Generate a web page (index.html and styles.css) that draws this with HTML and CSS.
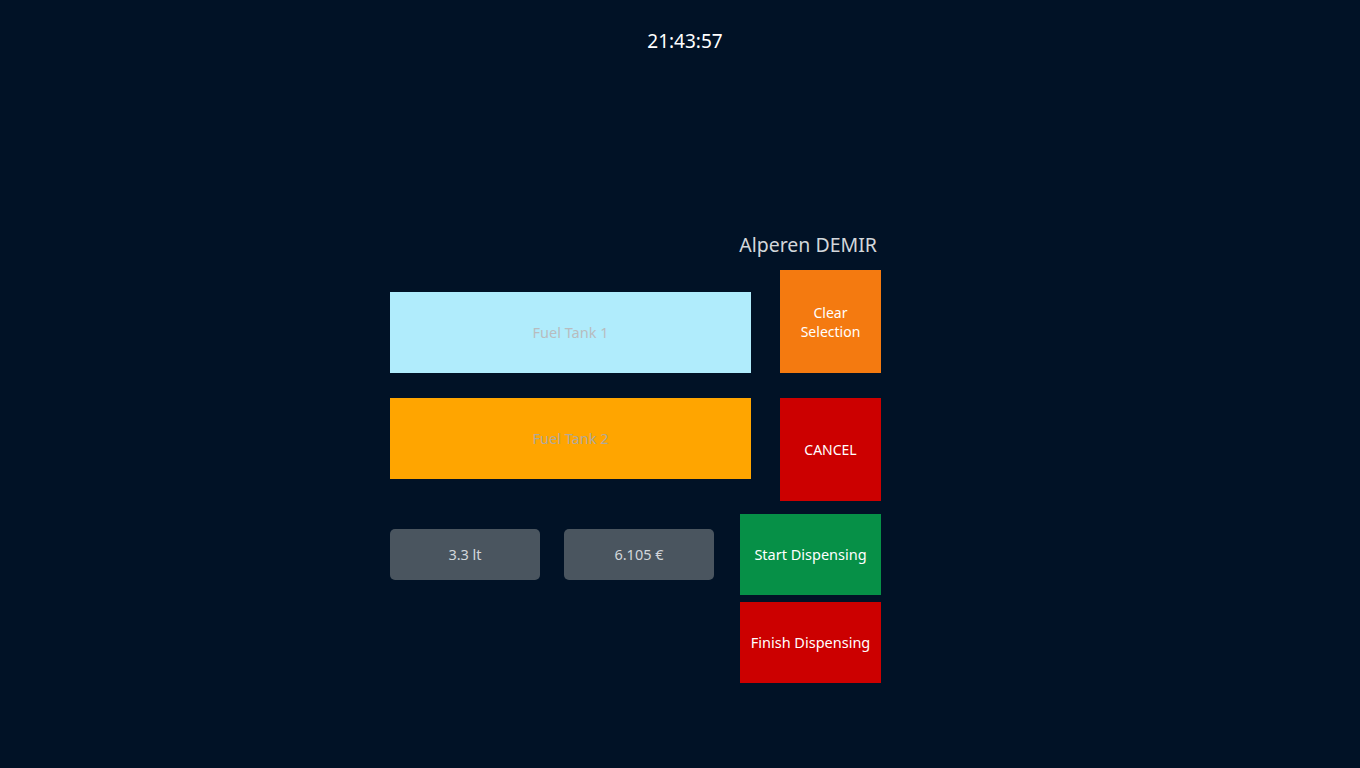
FILE: index.html
```html
<!DOCTYPE html>
<html>
<head>
<meta charset="utf-8">
<link rel="stylesheet" href="styles.css">
</head>
<body>
<div class="screen">
  <div class="clock">21:43:57</div>
  <div class="panel">
    <div class="user">Alperen DEMIR</div>
    <div class="row row-1">
      <div class="tank tank-1">Fuel Tank 1</div>
      <div class="btn btn-clear">Clear<br>Selection</div>
    </div>
    <div class="row row-2">
      <div class="tank tank-2">Fuel Tank 2</div>
      <div class="btn btn-cancel">CANCEL</div>
    </div>
    <div class="row row-3">
      <div class="values">
        <div class="value">3.3 lt</div>
        <div class="value">6.105 €</div>
      </div>
      <div class="btn btn-wide btn-start">Start Dispensing</div>
    </div>
    <div class="row row-4">
      <div class="btn btn-wide btn-finish">Finish Dispensing</div>
    </div>
  </div>
</div>
</body>
</html>
```
FILE: styles.css
```css
* { box-sizing: border-box; }
html, body {
  margin: 0;
  padding: 0;
  background: #011226;
  font-family: "Noto Sans", "Open Sans", sans-serif;
}
.screen {
  width: 1360px;
  height: 768px;
  display: flex;
  flex-direction: column;
}
.clock {
  margin-top: 28px;
  text-align: center;
  color: #ffffff;
  font-size: 19px;
  line-height: 26px;
  padding-left: 10px;
}
.panel {
  margin-top: 178px;
  margin-left: 390px;
  width: 491px;
  display: flex;
  flex-direction: column;
}
.user {
  text-align: right;
  color: #d3d7db;
  font-size: 19.5px;
  line-height: 26px;
  padding-right: 4px;
}
.row {
  display: flex;
  justify-content: space-between;
}
.row-1 {
  margin-top: 12px;
  align-items: flex-end;
}
.row-2 {
  margin-top: 25px;
  align-items: flex-start;
}
.row-3 {
  margin-top: 13px;
  align-items: center;
}
.row-4 {
  margin-top: 7px;
  justify-content: flex-end;
}
.tank {
  width: 361px;
  height: 81px;
  display: flex;
  align-items: center;
  justify-content: center;
  font-size: 14.5px;
  padding-bottom: 1px;
}
.tank-1 { background: #b0ecfc; color: #b8bcbf; }
.tank-2 { background: #ffa500; color: #b0a99d; }
.btn {
  width: 101px;
  height: 103px;
  display: flex;
  align-items: center;
  justify-content: center;
  text-align: center;
  color: #ffffff;
  font-size: 14px;
  line-height: 19px;
}
.btn-clear { background: #f47a10; }
.btn-cancel { background: #cc0000; }
.btn-wide {
  width: 141px;
  height: 81px;
  font-size: 14.5px;
}
.btn-start { background: #069047; }
.btn-finish { background: #cc0000; }
.values {
  display: flex;
  gap: 24px;
}
.value {
  width: 150px;
  height: 51px;
  border-radius: 5px;
  background: #4a555f;
  color: #d3d7db;
  font-size: 14.5px;
  display: flex;
  align-items: center;
  justify-content: center;
  padding-bottom: 1px;
}
```
